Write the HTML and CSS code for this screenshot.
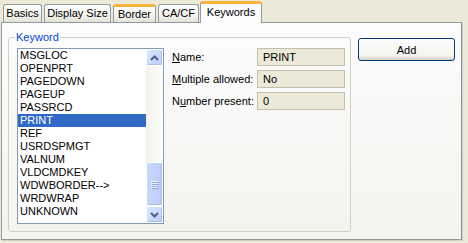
FILE: index.html
```html
<!DOCTYPE html>
<html>
<head>
  <title>Keywords</title>
  <link rel="stylesheet" href="styles.css">
</head>
<body>
  <div class="tabs">
    <div class="tab tab-basics">Basics</div>
    <div class="tab tab-display">Display Size</div>
    <div class="tab tab-border hot">Border</div>
    <div class="tab tab-cacf">CA/CF</div>
    <div class="tab tab-keywords active">Keywords</div>
  </div>

  <div class="panel">
    <fieldset class="group">
      <legend>Keyword</legend>
      <div class="group-body">
        <div class="listbox">
          <ul class="items">
            <li>MSGLOC</li>
            <li>OPENPRT</li>
            <li>PAGEDOWN</li>
            <li>PAGEUP</li>
            <li>PASSRCD</li>
            <li class="selected">PRINT</li>
            <li>REF</li>
            <li>USRDSPMGT</li>
            <li>VALNUM</li>
            <li>VLDCMDKEY</li>
            <li>WDWBORDER--&gt;</li>
            <li>WRDWRAP</li>
            <li>UNKNOWN</li>
          </ul>
          <div class="scrollbar">
            <div class="sb-button">
              <svg width="9" height="6" viewBox="0 0 9 6">
                <path d="M1 5 L4.5 1.5 L8 5" fill="none" stroke="#4d6185" stroke-width="2"/>
              </svg>
            </div>
            <div class="sb-track">
              <div class="sb-thumb">
                <span></span><span></span><span></span><span></span>
              </div>
            </div>
            <div class="sb-button">
              <svg width="9" height="6" viewBox="0 0 9 6">
                <path d="M1 1 L4.5 4.5 L8 1" fill="none" stroke="#4d6185" stroke-width="2"/>
              </svg>
            </div>
          </div>
        </div>

        <div class="fields">
          <div class="row">
            <span class="label"><u>N</u>ame:</span>
            <div class="field">PRINT</div>
          </div>
          <div class="row">
            <span class="label"><u>M</u>ultiple allowed:</span>
            <div class="field">No</div>
          </div>
          <div class="row">
            <span class="label">N<u>u</u>mber present:</span>
            <div class="field">0</div>
          </div>
        </div>
      </div>
    </fieldset>

    <div class="side">
      <button class="button">Add</button>
    </div>
  </div>
</body>
</html>
```

FILE: styles.css
```css
:root {
  --face: #ece9d8;
  --tab-border: #919b9c;
  --list-border: #7f9db9;
  --select: #316ac5;
  --text: #000;
}

* {
  box-sizing: border-box;
}

body {
  margin: 0;
  width: 468px;
  height: 243px;
  overflow: hidden;
  background: var(--face);
  font-family: "Liberation Sans", Arial, sans-serif;
  font-size: 11px;
  color: var(--text);
}

/* tab strip */

.tabs {
  display: flex;
  align-items: flex-end;
  height: 22px;
  padding-left: 3px;
}

.tab {
  height: 18px;
  margin-right: 2px;
  border: 1px solid var(--tab-border);
  border-bottom: none;
  border-radius: 3px 3px 0 0;
  background: linear-gradient(#fefefe, #f0efe8 70%, #e3e1d6);
  text-align: center;
  line-height: 17px;
  white-space: nowrap;
}

.tab-basics { width: 39px; }
.tab-display { width: 67px; }
.tab-border { width: 43px; }
.tab-cacf { width: 41px; }

.tab.hot {
  border-top: 3px solid #f5b53c;
  line-height: 15px;
}

.tab-keywords {
  width: 62px;
  height: 22px;
  margin: 0 0 -1px -1px;
  border-top: 3px solid #f5b53c;
  background: #fcfcfe;
  line-height: 16px;
  position: relative;
  z-index: 1;
}

/* page */

.panel {
  display: flex;
  align-items: flex-start;
  width: 461px;
  height: 218px;
  margin-left: 1px;
  padding: 8px 0 0 6px;
  border: 1px solid var(--tab-border);
  border-right-color: #8e9496;
  background: linear-gradient(#fcfcfe, #f4f3ee);
  box-shadow: 1px 1px 0 #d0cec2;
}

.group {
  margin: 0;
  padding: 0 5px 7px 8px;
  width: 342px;
  border: 1px solid #d0d0bf;
  border-radius: 3px;
}

.group legend {
  padding: 0 1px;
  margin-left: -2px;
  color: #0046d5;
  line-height: 13px;
}

.group-body {
  display: flex;
  gap: 8px;
  padding-top: 4px;
}

/* list box */

.listbox {
  display: flex;
  width: 147px;
  height: 176px;
  border: 1px solid var(--list-border);
  background: #fff;
}

.items {
  flex: 1;
  margin: 0;
  padding: 0;
  list-style: none;
}

.items li {
  height: 13px;
  padding-left: 2px;
  line-height: 13px;
  white-space: nowrap;
}

.items li.selected {
  background: var(--select);
  color: #fff;
}

.scrollbar {
  display: flex;
  flex-direction: column;
  width: 17px;
  background: linear-gradient(90deg, #f3f1ec, #fefefb);
}

.sb-button {
  display: flex;
  align-items: center;
  justify-content: center;
  height: 17px;
  border: 1px solid #fff;
  border-radius: 2px;
  background: linear-gradient(135deg, #dde8fe, #bccdf8);
  box-shadow: inset -1px -1px 0 #a9bde9;
}

.sb-track {
  flex: 1;
  display: flex;
  flex-direction: column;
  justify-content: flex-end;
}

.sb-thumb {
  display: flex;
  flex-direction: column;
  align-items: center;
  justify-content: center;
  gap: 1px;
  height: 44px;
  border: 1px solid #fff;
  border-radius: 2px;
  background: linear-gradient(90deg, #c8d8fd, #bccdf9);
  box-shadow: inset -1px -1px 0 #a9bde9;
}

.sb-thumb span {
  width: 7px;
  height: 1px;
  background: #eef3fe;
  box-shadow: 1px 1px 0 #8ca4e0;
}

/* read-only fields */

.fields {
  display: flex;
  flex-direction: column;
  gap: 4px;
}

.row {
  display: flex;
  align-items: center;
}

.label {
  width: 85px;
  white-space: nowrap;
}

.field {
  width: 88px;
  height: 18px;
  padding-left: 5px;
  border: 1px solid #c2bfb0;
  background: var(--face);
  line-height: 16px;
}

/* buttons */

.side {
  margin-left: 7px;
  padding-top: 7px;
}

.button {
  width: 97px;
  height: 23px;
  padding: 0;
  border: 1px solid #003c74;
  border-radius: 3px;
  background: linear-gradient(#fefefe, #f3f3ef 80%, #d6d0c5);
  font-family: inherit;
  font-size: 11px;
  color: var(--text);
}
```
